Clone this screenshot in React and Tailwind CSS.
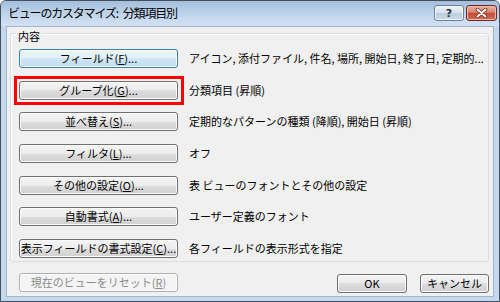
import React from "react";

const font = { fontFamily: '"Noto Sans CJK JP", "Noto Sans", sans-serif' };

function Btn({ children, w = "w-[159px]", variant = "normal" }) {
  const base =
    "h-[19px] shrink-0 rounded-[3px] border flex items-center justify-center text-[11px] leading-none " + w;
  const styles = {
    normal:
      "border-[#707070] text-black bg-[linear-gradient(to_bottom,#f4f4f4_0%,#ececec_50%,#dedede_50%,#d0d0d0_100%)] shadow-[inset_0_0_0_1px_#fbfbfb]",
    hot:
      "border-[#3c7fb1] text-black bg-[linear-gradient(to_bottom,#eef7fd_0%,#e0eff9_50%,#cfe6f5_50%,#c0dcee_100%)] shadow-[inset_0_0_0_1px_#f6fbfe]",
    disabled:
      "border-[#adb2b5] text-[#8a8a8a] bg-[#f4f4f4] shadow-[inset_0_0_0_1px_#fcfcfc]",
  };
  return <div className={base + " " + styles[variant]}>{children}</div>;
}

function K({ children }) {
  return <span className="underline underline-offset-[1px]">{children}</span>;
}

function Row({ label, desc, variant, highlight }) {
  return (
    <div className="flex items-center">
      <div className="relative">
        <Btn variant={variant}>{label}</Btn>
        {highlight && (
          <div className="absolute -left-[5px] -top-[5px] -right-[6px] -bottom-[5px] border-[3px] border-[#ff0000]" />
        )}
      </div>
      <div className="ml-[11px] text-[11px] leading-none text-black whitespace-nowrap">{desc}</div>
    </div>
  );
}

export default function App() {
  return (
    <div
      style={font}
      className="w-[500px] h-[302px] flex flex-col border border-[#44505e] rounded-t-[6px] bg-[#c4d8ee] overflow-hidden"
    >
      {/* title bar */}
      <div className="h-[25px] shrink-0 flex items-start bg-[linear-gradient(to_bottom,#a3bedc_0%,#bcd2ea_45%,#d3e2f2_100%)]">
        <div className="pl-[7px] pt-[6px] text-[12px] tracking-[-1.2px] leading-none text-black whitespace-nowrap flex">
          <span>ビューのカスタマイズ:</span>
          <span className="ml-[5px]">分類項目別</span>
        </div>
        <div className="ml-auto mr-[2px] mt-[4px] flex gap-[2px]">
          <div className="w-[30px] h-[16px] rounded-[3px] border border-[#6e7f93] bg-[linear-gradient(to_bottom,#edf2f8_0%,#d6e1ee_50%,#bccde1_50%,#c8d8ea_100%)] flex items-center justify-center shadow-[inset_0_0_0_1px_#f3f7fb]">
            <span className="text-[11px] font-bold leading-none text-[#2a2f36]" style={{ fontFamily: '"DejaVu Sans", sans-serif' }}>?</span>
          </div>
          <div className="w-[31px] h-[16px] rounded-[3px] border border-[#6b2a22] bg-[linear-gradient(to_bottom,#eab3a5_0%,#d9836f_45%,#c44a33_50%,#d0705a_100%)] flex items-center justify-center shadow-[inset_0_0_0_1px_#f0b8aa]">
            <svg width="13" height="10" viewBox="0 0 13 10">
              <path d="M2.5 1.5 L10.5 8.5 M10.5 1.5 L2.5 8.5" stroke="#6a2418" strokeWidth="3.6" strokeLinecap="round" />
              <path d="M2.5 1.5 L10.5 8.5 M10.5 1.5 L2.5 8.5" stroke="#ffffff" strokeWidth="2" strokeLinecap="round" />
            </svg>
          </div>
        </div>
      </div>

      {/* client */}
      <div className="flex-1 mx-[5px] mb-[4px] border border-[#9fb5cf] bg-[#f0f0f0] flex flex-col pl-[3px] pr-[4px]">
        <div className="mt-[6px] relative rounded-[3px] border border-[#d5dfe5] shadow-[inset_1px_1px_0_#ffffff] pt-[15px] pl-[8px] pb-[3px] flex flex-col gap-[12.67px]">
          <span className="absolute left-[5px] -top-[4px] px-[2px] bg-[#f0f0f0] text-[11px] leading-[13px] text-black">
            内容
          </span>
          <Row
            variant="hot"
            label={<>フィールド(<K>F</K>)...</>}
            desc="アイコン, 添付ファイル, 件名, 場所, 開始日, 終了日, 定期的..."
          />
          <Row highlight variant="normal" label={<>グループ化(<K>G</K>)...</>} desc="分類項目 (昇順)" />
          <Row variant="normal" label={<>並べ替え(<K>S</K>)...</>} desc="定期的なパターンの種類 (降順), 開始日 (昇順)" />
          <Row variant="normal" label={<>フィルタ(<K>L</K>)...</>} desc="オフ" />
          <Row variant="normal" label={<>その他の設定(<K>O</K>)...</>} desc="表 ビューのフォントとその他の設定" />
          <Row variant="normal" label={<>自動書式(<K>A</K>)...</>} desc="ユーザー定義のフォント" />
          <Row variant="normal" label={<>表示フィールドの書式設定(<K>C</K>)...</>} desc="各フィールドの表示形式を指定" />
        </div>

        <div className="mt-[11px] flex items-start">
          <div className="ml-[9px]">
            <Btn variant="disabled">現在のビューをリセット(<K>R</K>)</Btn>
          </div>
          <div className="ml-auto mt-[1px] flex gap-[13px]">
            <Btn w="w-[70px] h-[18px]" variant="normal">OK</Btn>
            <Btn w="w-[69px] h-[18px]" variant="normal">キャンセル</Btn>
          </div>
        </div>
      </div>
    </div>
  );
}
